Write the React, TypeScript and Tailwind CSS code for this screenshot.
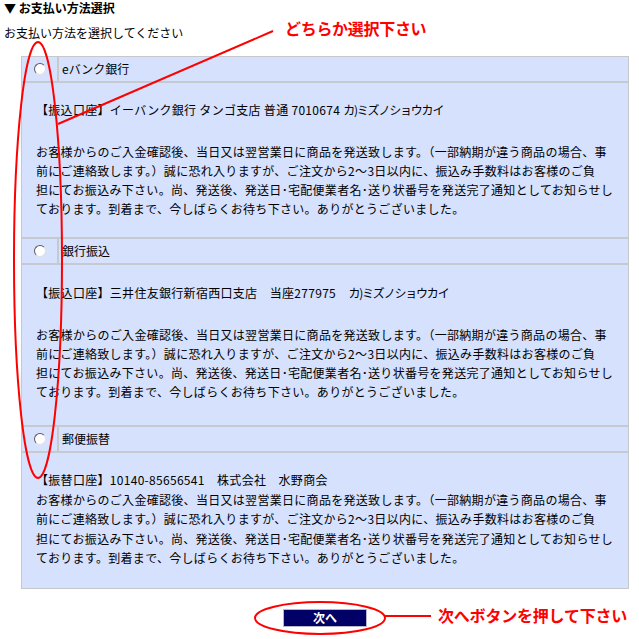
import React from "react";

const para = [
  "お客様からのご入金確認後、当日又は翌営業日に商品を発送致します。（一部納期が違う商品の場合、事",
  "前にご連絡致します。）誠に恐れ入りますが、ご注文から2〜3日以内に、振込み手数料はお客様のご負",
  "担にてお振込み下さい。尚、発送後、発送日･宅配便業者名･送り状番号を発送完了通知としてお知らせし",
  "ております。到着まで、今しばらくお待ち下さい。ありがとうございました。",
];

function Radio() {
  return (
    <span className="block w-[12px] h-[12px] rounded-full bg-white border border-t-[#5a5a5a] border-l-[#5a5a5a] border-r-[#e0e0e0] border-b-[#e0e0e0]" />
  );
}

function Header({ label }: { label: string }) {
  return (
    <div className="flex gap-[2px] h-[24px]">
      <div className="w-[35px] bg-[#d5e1fd] flex items-center justify-center">
        <Radio />
      </div>
      <div className="flex-1 bg-[#d5e1fd] flex items-center pl-[3px]">{label}</div>
    </div>
  );
}

function Para({ leading }: { leading: string }) {
  return (
    <div className={leading}>
      {para.map((l, i) => (
        <div key={i} className="whitespace-nowrap">
          {l}
        </div>
      ))}
    </div>
  );
}

export default function App() {
  return (
    <div className="relative w-[639px] h-[639px] bg-white text-black text-[12px] font-['Noto_Sans_CJK_JP',sans-serif] overflow-hidden">
      <div className="pl-[4px] h-[16px] leading-[16px] font-bold">▼ お支払い方法選択</div>
      <div className="pl-[4px] mt-[10px] leading-[14px]">お支払い方法を選択してください</div>

      <div className="ml-[21px] mt-[16px] w-[608px] border border-[#c6c8cc] bg-[#c6c9d0] flex flex-col gap-[2px]">
        <Header label="eバンク銀行" />
        <div className="bg-[#d5e1fd] pl-[14px] pt-[17px] pb-[19px] leading-[19px] tracking-[0.3px]">
          <div className="whitespace-nowrap">
            {"【振込口座】イーバンク銀行 タンゴ支店 普通 7010674 "}
            <span className="tracking-[-1.2px]">カ)ミズノショウカイ</span>
          </div>
          <div className="mt-[23px]">
            <Para leading="leading-[19px]" />
          </div>
        </div>

        <Header label="銀行振込" />
        <div className="bg-[#d5e1fd] pl-[14px] pt-[18px] pb-[24px] leading-[19px] tracking-[0.3px]">
          <div className="whitespace-nowrap">
            {"【振込口座】三井住友銀行新宿西口支店\u3000当座277975\u3000"}
            <span className="tracking-[-1.2px]">カ)ミズノショウカイ</span>
          </div>
          <div className="mt-[23px]">
            <Para leading="leading-[19px]" />
          </div>
        </div>

        <Header label="郵便振替" />
        <div className="bg-[#d5e1fd] pl-[14px] pt-[17px] pb-[20px] leading-[19.5px] tracking-[0.3px]">
          <div className="whitespace-nowrap">{"【振替口座】10140-85656541\u3000株式会社\u3000水野商会"}</div>
          <Para leading="leading-[19.5px]" />
        </div>
      </div>

      <div className="ml-[21px] w-[608px] mt-[20px] flex justify-center">
        <button className="w-[84px] h-[18px] bg-[#000066] border border-[#b8b8c8] text-white text-[12px] leading-[16px] font-bold flex items-center justify-center">
          次へ
        </button>
      </div>

      <svg
        className="absolute left-0 top-0 pointer-events-none"
        width="639"
        height="639"
        viewBox="0 0 639 639"
      >
        <ellipse cx="38" cy="260" rx="24" ry="218" fill="none" stroke="#ff0000" strokeWidth="2" />
        <line x1="58" y1="124" x2="273" y2="31" stroke="#ff0000" strokeWidth="2" />
        <ellipse cx="320" cy="618" rx="65" ry="16" fill="none" stroke="#ff0000" strokeWidth="2" />
        <line x1="385" y1="616" x2="431" y2="616" stroke="#ff0000" strokeWidth="2" />
      </svg>

      <div className="absolute left-[285px] top-[17px] text-[16px] leading-[22px] font-bold text-[#ff0000] whitespace-nowrap tracking-[-0.3px]">
        どちらか選択下さい
      </div>
      <div className="absolute left-[438px] top-[604px] text-[16px] leading-[22px] font-bold text-[#ff0000] whitespace-nowrap tracking-[-0.2px]">
        次へボタンを押して下さい
      </div>
    </div>
  );
}
